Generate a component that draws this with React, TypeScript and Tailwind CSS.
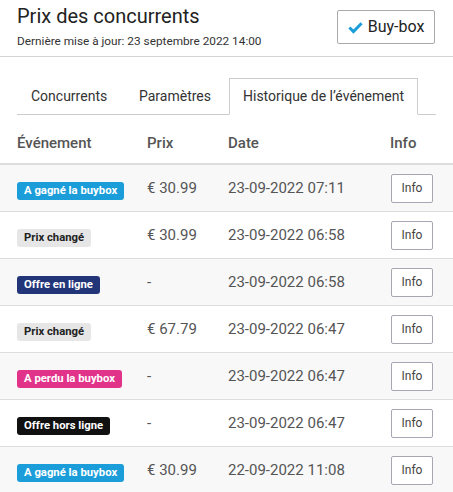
import React from "react";

type Row = {
  label: string;
  badge: string;
  price: string;
  date: string;
};

const rows: Row[] = [
  { label: "A gagné la buybox", badge: "bg-[#1b9dd9] text-white", price: "€ 30.99", date: "23-09-2022 07:11" },
  { label: "Prix changé", badge: "bg-[#e6e6e6] text-[#222]", price: "€ 30.99", date: "23-09-2022 06:58" },
  { label: "Offre en ligne", badge: "bg-[#233579] text-white", price: "-", date: "23-09-2022 06:58" },
  { label: "Prix changé", badge: "bg-[#e6e6e6] text-[#222]", price: "€ 67.79", date: "23-09-2022 06:47" },
  { label: "A perdu la buybox", badge: "bg-[#e2338b] text-white", price: "-", date: "23-09-2022 06:47" },
  { label: "Offre hors ligne", badge: "bg-[#111] text-white", price: "-", date: "23-09-2022 06:47" },
  { label: "A gagné la buybox", badge: "bg-[#1b9dd9] text-white", price: "€ 30.99", date: "22-09-2022 11:08" },
];

export default function App() {
  return (
    <div className="w-[453px] h-[492px] overflow-hidden bg-white font-['Roboto',sans-serif] text-[#333]">
      {/* Header */}
      <div className="flex items-start justify-between px-[17px] pt-[4px] h-[57px] border-b border-[#d4d4d4]">
        <div>
          <h1 className="text-[20px] leading-[24px] text-[#222]">Prix des concurrents</h1>
          <p className="text-[11.8px] leading-[16px] mt-[5px] text-[#333]">
            Dernière mise à jour: 23 septembre 2022 14:00
          </p>
        </div>
        <button className="mt-[6px] flex items-center gap-[5px] h-[34px] w-[98px] mr-[1px] justify-center border border-[#aaa] rounded-[2px] text-[16px] text-[#222] bg-white">
          <svg width="15" height="13" viewBox="0 0 16 13">
            <path d="M1.5 6.5 L5.8 10.8 L14.5 2" fill="none" stroke="#1b9dd9" strokeWidth="3.2" />
          </svg>
          Buy-box
        </button>
      </div>

      {/* Tabs */}
      <div className="px-[17px] pt-[21px]">
        <div className="flex items-end border-b border-[#ccc] h-[37px]">
          <div className="w-[106px] pl-[14px] h-full flex items-center text-[14px] text-[#333]">Concurrents</div>
          <div className="w-[106px] pl-[16px] h-full flex items-center text-[14px] text-[#333]">Paramètres</div>
          <div className="px-[13px] h-[37px] mb-[-1px] flex items-center text-[14px] text-[#333] bg-white border border-[#ccc] border-b-white">
            Historique de l’événement
          </div>
        </div>
      </div>

      {/* Table */}
      <div>
        <div className="grid grid-cols-[130px_81px_162px_1fr] items-center h-[50px] pt-[9px] px-[17px] border-b-2 border-[#ddd] text-[15px] font-medium text-[#555]">
          <div>Événement</div>
          <div>Prix</div>
          <div>Date</div>
          <div>Info</div>
        </div>
        {rows.map((r, i) => (
          <div
            key={i}
            className={`grid grid-cols-[130px_81px_162px_1fr] items-center h-[47px] px-[17px] border-b border-[#ddd] ${
              i % 2 === 0 ? "bg-[#f8f8f8]" : "bg-white"
            }`}
          >
            <div className="pt-[2px]">
              <span className={`inline-block px-[7px] h-[18px] leading-[18px] rounded-[3px] text-[11.3px] font-bold ${r.badge}`}>
                {r.label}
              </span>
            </div>
            <div className="text-[15px] text-[#555]">{r.price}</div>
            <div className="text-[15px] text-[#555]">{r.date}</div>
            <div className="pl-[1px]">
              <button className="w-[42px] h-[29px] border border-[#a9a6b3] rounded-[2px] bg-white text-[12px] text-[#444]">
                Info
              </button>
            </div>
          </div>
        ))}
      </div>
    </div>
  );
}
